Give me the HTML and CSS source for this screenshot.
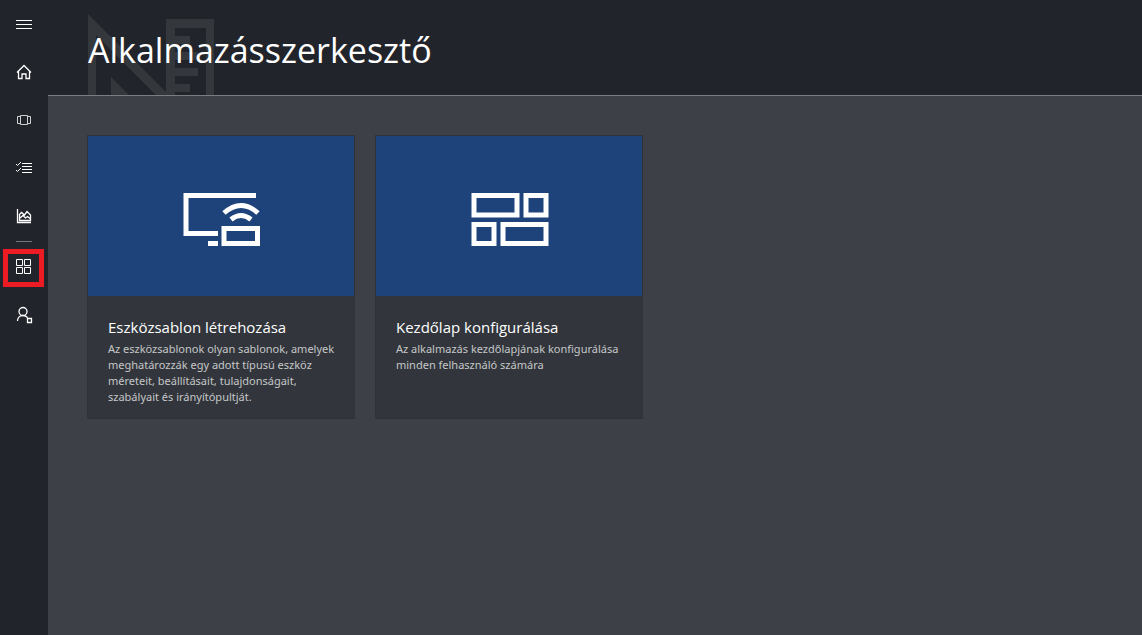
FILE: index.html
```html
<!DOCTYPE html>
<html lang="hu">
<head>
<meta charset="utf-8">
<title>Alkalmazásszerkesztő</title>
<link rel="stylesheet" href="styles.css">
</head>
<body>
<nav class="sidebar" aria-label="Navigáció">
  <button class="nav-item" type="button" aria-label="Menü">
    <svg viewBox="0 0 24 24"><path d="M4 8.500h16M4 12.500h16M4 16.500h16"/></svg>
  </button>
  <a class="nav-item" href="#" aria-label="Kezdőlap">
    <svg class="strong" viewBox="0 0 24 24"><path d="M5 12.500L12 5.500l7 7M6.500 11.500v7h3.500v-4.500h4v4.500h3.500v-7"/></svg>
  </a>
  <a class="nav-item" href="#" aria-label="Eszközök">
    <svg class="muted" viewBox="0 0 24 24"><path d="M8.500 7.500h7v9h-7zM8 8.500H5.500v7H8M16 8.500h2.500v7H16"/></svg>
  </a>
  <a class="nav-item" href="#" aria-label="Szabályok">
    <svg viewBox="0 0 24 24"><path d="M10 7.500h10M10 10.500h10M10 13.500h10M10 16.500h10M4 8l1.500 1.500L9 6M4 14l1.500 1.500L9 12"/></svg>
  </a>
  <a class="nav-item" href="#" aria-label="Elemzés">
    <svg class="strong" viewBox="0 0 24 24"><path d="M5.500 5v13.500H19M7.500 16.500v-6l2-2 3 2.500 2.500-3.500 3.500 3.500v5.500zM8 14l3-2.500 2.500 2.500 2-1.500 2.500 2"/></svg>
  </a>
  <hr class="divider">
  <a class="nav-item active" href="#" aria-label="Alkalmazásszerkesztő" aria-current="page">
    <svg viewBox="0 0 24 24"><path d="M4.500 4.500h6v6h-6zM12.500 4.500h6v6h-6zM4.500 12.500h6v6h-6zM12.500 12.500h6v6h-6z"/></svg>
  </a>
  <a class="nav-item" href="#" aria-label="Felügyelet">
    <svg class="strong" viewBox="0 0 24 24"><circle cx="11" cy="8.500" r="4"/><path d="M5.500 18c0-3 2-5.500 5.500-5.500 2 0 3.500 1 4.500 2M15.500 15.500h4v4h-4z"/></svg>
  </a>
</nav>
<div class="page">
  <header class="header">
    <svg class="watermark" viewBox="0 0 126 81" aria-hidden="true">
      <path d="M0 0L78 78V81H68L8 21V81H0zM23 63l18 18H23z"/>
      <path d="M78 5h48v76h-8V14H87v8h15v8H87v8h23v8H87v8h23v8H87v8h15v8H87v4h-9z"/>
    </svg>
    <h1 class="title">Alkalmazásszerkesztő</h1>
  </header>
  <main class="cards">
    <a class="card" href="#">
      <span class="tile">
        <svg class="tile-icon" viewBox="0 0 78 54" aria-hidden="true"><path d="M73 2.500H3v38h32M25 50.500h10M41 35.500h33.500v15H41z"/><path d="M41 20q17-15 34 0M48 26.500q10-8 20 0"/></svg>
      </span>
      <span class="body">
        <span class="card-title">Eszközsablon létrehozása</span>
        <span class="text">Az eszközsablonok olyan sablonok, amelyek meghatározzák egy adott típusú eszköz méreteit, beállításait, tulajdonságait, szabályait és irányítópultját.</span>
      </span>
    </a>
    <a class="card" href="#">
      <span class="tile">
        <svg class="tile-icon" viewBox="0 0 78 54" aria-hidden="true"><path d="M3 2.500h43v19.500H3zM55 2.500h20v19.500H55zM3 31.500h20v19H3zM32 31.500h43v19H32z"/></svg>
      </span>
      <span class="body">
        <span class="card-title">Kezdőlap konfigurálása</span>
        <span class="text">Az alkalmazás kezdőlapjának konfigurálása minden felhasználó számára</span>
      </span>
    </a>
  </main>
</div>
</body>
</html>
```
FILE: styles.css
```css
* { box-sizing: border-box; }
body {
  display: flex;
  min-height: 100vh;
  margin: 0;
  background: #3d4047;
  color: #fff;
  font-family: "Open Sans", "Noto Sans", sans-serif;
}
.sidebar {
  display: flex;
  flex-direction: column;
  flex: 0 0 48px;
  background: #21242b;
}
.nav-item {
  display: grid;
  place-items: center;
  width: 48px;
  height: 48px;
  padding: 0;
  border: 0;
  background: none;
  color: #fff;
}
.nav-item svg {
  width: 24px;
  height: 24px;
  fill: none;
  stroke: currentColor;
  stroke-width: 1;
}
.nav-item .muted { color: #d0d2d4; }
.nav-item .strong { stroke-width: 1.3; }
.divider {
  width: 16px;
  height: 1px;
  margin: 1px auto;
  border: 0;
  background: #74777b;
}
.nav-item.active {
  width: 41px;
  height: 38px;
  margin: 6px 0 4px 3px;
  padding-bottom: 2px;
  border: 5px solid #ed1c24;
}
.page { flex: 1; min-width: 0; }
.header {
  display: flex;
  align-items: center;
  position: relative;
  height: 96px;
  padding: 4px 40px 0;
  border-bottom: 1px solid #7b7d81;
  background: #21242b;
}
.watermark {
  position: absolute;
  left: 40px;
  bottom: 0;
  width: 126px;
  height: 81px;
  fill: #34373c;
}
.title {
  position: relative;
  margin: 0;
  font-size: 34px;
  line-height: 48px;
  font-weight: 400;
}
.cards {
  display: flex;
  flex-wrap: wrap;
  gap: 20px;
  padding: 39px;
}
.card {
  display: flex;
  flex-direction: column;
  width: 268px;
  min-height: 284px;
  border: 1px solid #303235;
  background: #32363c;
  color: inherit;
  text-decoration: none;
}
.tile {
  display: grid;
  place-items: center;
  height: 160px;
  padding: 8px 0 0 2px;
  background: #1d437a;
}
.tile-icon {
  width: 78px;
  height: 54px;
  fill: none;
  stroke: #fff;
  stroke-width: 5;
}
.body {
  display: flex;
  flex-direction: column;
  gap: 4px;
  padding: 21px 8px 12px 20px;
}
.card-title { font-size: 15px; line-height: 20px; }
.text {
  color: #c5c6c8;
  font-family: "Noto Sans", "Open Sans", sans-serif;
  font-size: 11px;
  line-height: 16px;
}
```
